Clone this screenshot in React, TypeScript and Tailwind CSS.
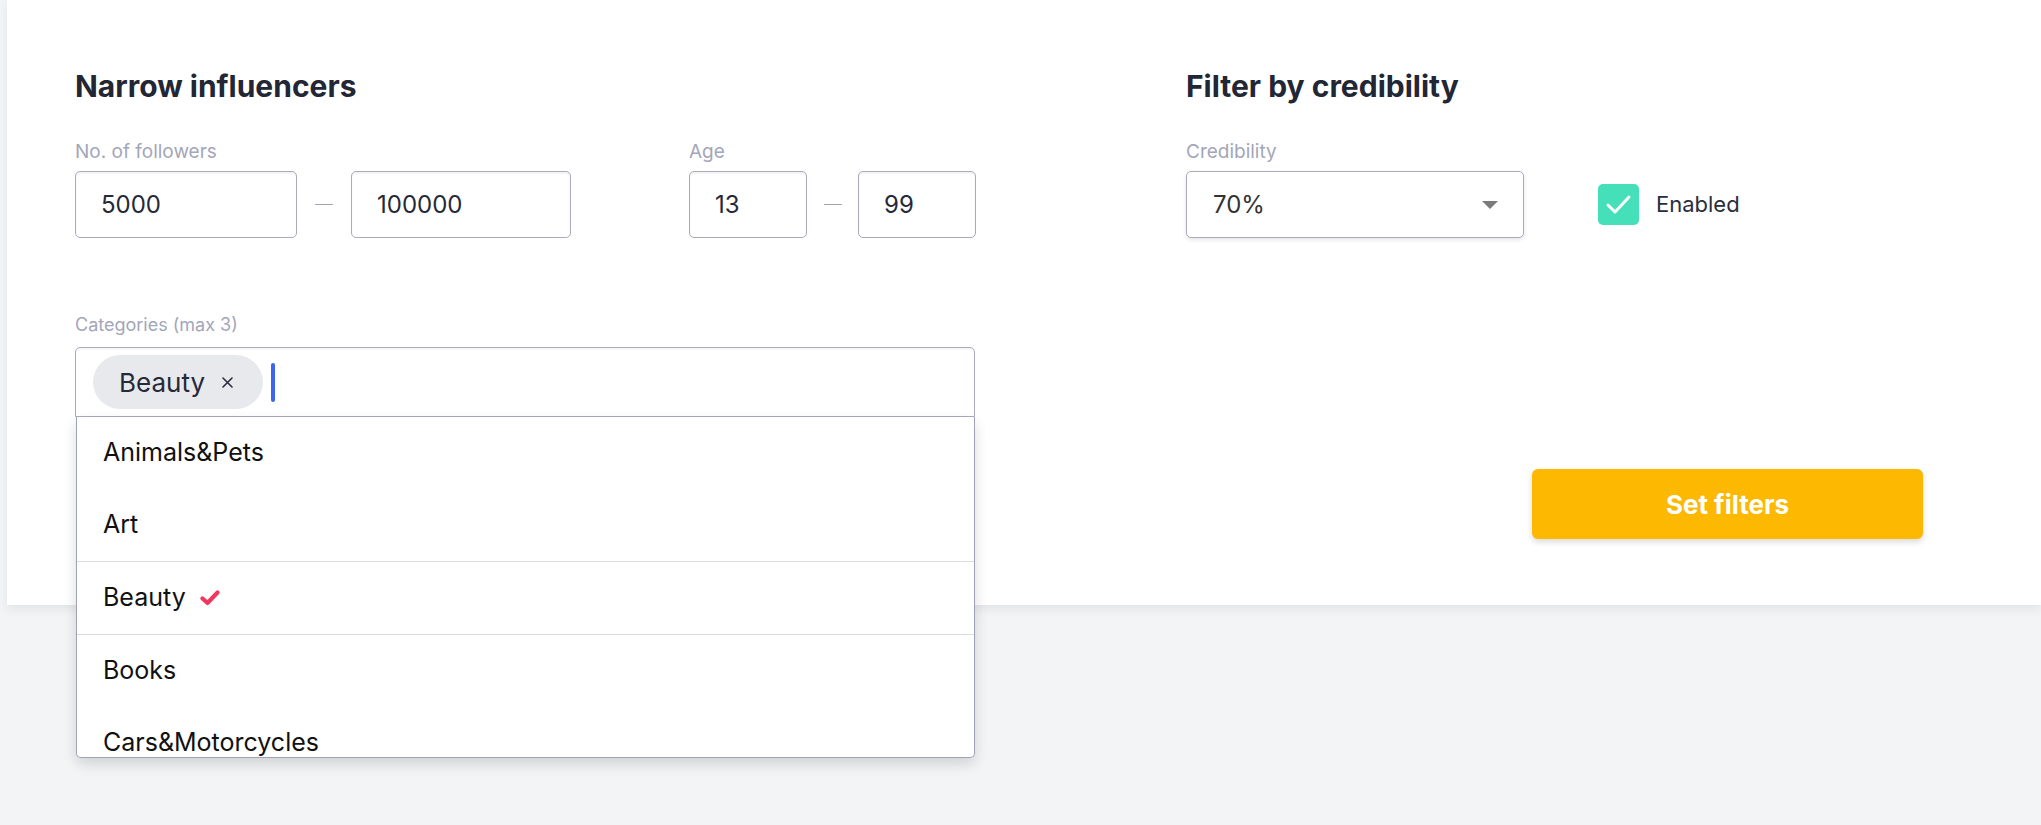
import React from "react";

function NumInput({ value, w }: { value: string; w: string }) {
  return (
    <div
      className={`${w} h-[67px] rounded-[5px] border-[1.5px] border-[#a9abbd] bg-white shadow-[inset_0_2px_2px_rgba(0,0,0,0.05)] flex items-center pl-[25px] text-[24px] text-[#262938]`}
    >
      {value}
    </div>
  );
}

function Dash({ w }: { w: string }) {
  return (
    <div className={`${w} flex justify-center`}>
      <div className="w-[18px] h-[1.5px] bg-[#a3a5b8]" />
    </div>
  );
}

export default function App() {
  const items = ["Animals&Pets", "Art", "Beauty", "Books", "Cars&Motorcycles"];
  return (
    <div className="h-[825px] w-full bg-[#f3f4f6] pl-[7px] font-[Inter,sans-serif]">
      <div className="relative h-[605px] bg-white shadow-[0_4px_10px_rgba(0,0,0,0.07)] flex pl-[68px] pt-[69px]">
        {/* Left column */}
        <div className="w-[900px] flex flex-col">
          <h2 className="text-[30px] leading-[34px] font-bold text-[#232634]">Narrow influencers</h2>
          <div className="mt-[37px] flex">
            <div className="flex flex-col">
              <div className="text-[19px] leading-[24px] text-[#a3a6b9]">No. of followers</div>
              <div className="mt-[7px] flex items-center">
                <NumInput value="5000" w="w-[222px]" />
                <Dash w="w-[54px]" />
                <NumInput value="100000" w="w-[220px]" />
              </div>
            </div>
            <div className="ml-[118px] flex flex-col">
              <div className="text-[19px] leading-[24px] text-[#a3a6b9]">Age</div>
              <div className="mt-[7px] flex items-center">
                <NumInput value="13" w="w-[118px]" />
                <Dash w="w-[51px]" />
                <NumInput value="99" w="w-[118px]" />
              </div>
            </div>
          </div>

          <div className="mt-[75px] text-[18px] leading-[24px] text-[#a3a6b9]">Categories (max 3)</div>
          <div className="relative mt-[10px]">
            <div className="h-[70px] rounded-t-[5px] border-[1.5px] border-[#a9abbd] bg-white shadow-[inset_0_2px_2px_rgba(0,0,0,0.04)] flex items-center pl-[17px]">
              <div className="h-[54px] rounded-full bg-[#e8e9ec] flex items-center pl-[26px] pr-[30px] text-[26px] text-[#262938]">
                <span>Beauty</span>
                <svg className="ml-[17px]" width="11" height="11" viewBox="0 0 11 11">
                  <path d="M1 1 L10 10 M10 1 L1 10" stroke="#2a2d3e" strokeWidth="1.6" strokeLinecap="round" />
                </svg>
              </div>
              <div className="ml-[8px] w-[4px] h-[39px] rounded-[2px] bg-[#3d63f2]" />
            </div>
            <div className="absolute top-full left-[1px] right-0 z-10 h-[341px] overflow-hidden rounded-b-[5px] border-x-[1.5px] border-b-[1.5px] border-[#9fa1b6] bg-white shadow-[0_6px_14px_rgba(0,0,0,0.14)]">
              {items.map((it) => (
                <div
                  key={it}
                  className={`h-[72px] flex items-center pl-[26px] text-[25px] text-[#111111] ${
                    it === "Beauty" ? "border-y border-[#dcdce0] h-[74px]" : ""
                  }`}
                >
                  <span>{it}</span>
                  {it === "Beauty" && (
                    <svg className="ml-[14px]" width="20" height="16" viewBox="0 0 20 16">
                      <path d="M2.5 8.5 L7.5 13 L17.5 2.5" fill="none" stroke="#f2375f" strokeWidth="4.2" strokeLinecap="round" strokeLinejoin="round" />
                    </svg>
                  )}
                </div>
              ))}
            </div>
          </div>
        </div>

        {/* Right column */}
        <div className="ml-[211px] w-[737px] flex flex-col">
          <h2 className="text-[30px] leading-[34px] font-bold text-[#232634]">Filter by credibility</h2>
          <div className="mt-[37px] text-[19px] leading-[24px] text-[#a3a6b9]">Credibility</div>
          <div className="mt-[7px] flex items-center">
            <div className="w-[338px] h-[67px] rounded-[5px] border-[1.5px] border-[#a9abbd] bg-white shadow-[0_2px_4px_rgba(0,0,0,0.1)] flex items-center justify-between pl-[26px] pr-[25px] text-[24px] text-[#333333]">
              <span>70%</span>
              <svg width="16" height="8" viewBox="0 0 16 8">
                <path d="M0 0 L16 0 L8 8 Z" fill="#7b7b7b" />
              </svg>
            </div>
            <div className="ml-[74px] w-[41px] h-[41px] rounded-[5px] bg-[#45e0b9] flex items-center justify-center">
              <svg width="41" height="41" viewBox="0 0 41 41">
                <path d="M10 21 L17 28 L31 13" fill="none" stroke="#ffffff" strokeWidth="3" strokeLinecap="round" strokeLinejoin="round" />
              </svg>
            </div>
            <span className="ml-[17px] text-[22px] text-[#2a2d3e]">Enabled</span>
          </div>
          <button className="mt-[231px] self-end w-[391px] h-[70px] rounded-[6px] bg-[#fdb902] text-white font-bold text-[26px] shadow-[0_3px_6px_rgba(0,0,0,0.15)]">
            Set filters
          </button>
        </div>
      </div>
    </div>
  );
}
